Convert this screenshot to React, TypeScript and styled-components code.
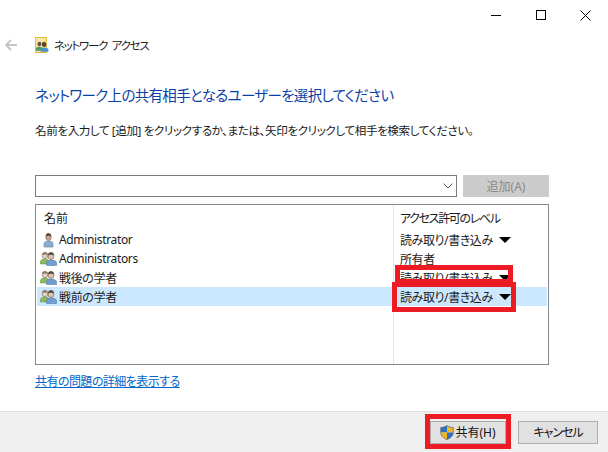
import React from 'react';
import styled, { createGlobalStyle } from 'styled-components';

const GlobalStyle = createGlobalStyle`
	html, body {
		margin: 0;
		padding: 0;
		background: #fff;
	}
	body {
		font-family: "Noto Sans", "Noto Sans CJK JP", sans-serif;
		font-size: 12px;
		font-feature-settings: "palt";
		color: #1a1a1a;
	}
`;

const Win = styled('div')`
	width: 608px;
	height: 452px;
	display: flex;
	flex-direction: column;
	overflow: hidden;
	position: relative;
`;

const TitleBar = styled('div')`
	height: 30px;
	display: flex;
	justify-content: flex-end;
	align-items: center;
`;

const WinButton = styled('div')`
	width: 45px;
	height: 28px;
	display: flex;
	align-items: center;
	justify-content: center;
	svg { display: block; }
`;

const NavRow = styled('div')`
	height: 30px;
	display: flex;
	align-items: center;
	padding-left: 5px;
	gap: 18px;
`;

const NavTitle = styled('div')`
	display: flex;
	align-items: center;
	gap: 5px;
	font-size: 11.5px;
	letter-spacing: -1.3px;
	word-spacing: 3px;
	color: #222;
`;

const Main = styled('div')`
	flex: 1;
	padding: 0 59px 0 35px;
	display: flex;
	flex-direction: column;
`;

const Heading = styled('h1')`
	margin: 24px 0 0;
	height: 22px;
	line-height: 22px;
	font-size: 14.5px;
	letter-spacing: -0.68px;
	font-weight: 400;
	color: #0a3fa8;
	white-space: nowrap;
`;

const Description = styled('p')`
	margin: 16px 0 0;
	height: 18px;
	line-height: 18px;
	font-size: 11.6px;
	letter-spacing: -0.42px;
	white-space: nowrap;
`;

const AddRow = styled('div')`
	margin-top: 35px;
	display: flex;
	gap: 6px;
	height: 22px;
`;

const Combo = styled('div')`
	flex: 1;
	background: #fff;
	border: 1px solid #7a7a7a;
	display: flex;
	align-items: center;
	justify-content: flex-end;
	padding-right: 3px;
`;

const AddButton = styled('div')`
	width: 86px;
	background: #cccccc;
	color: #8a8a8a;
	display: flex;
	align-items: center;
	justify-content: center;
	font-size: 12px;
`;

const Table = styled('div')`
	margin-top: 7px;
	height: 161px;
	border: 1px solid #828790;
	display: grid;
	grid-template-columns: 357px 1fr;
	position: relative;
	padding: 1px;
	box-sizing: border-box;
`;

const ColumnLine = styled('div')`
	position: absolute;
	top: 0;
	bottom: 0;
	left: 357px;
	width: 1px;
	background: #e5e5e5;
`;

const Rows = styled('div')`
	grid-column: 1 / 3;
	display: flex;
	flex-direction: column;
`;

const HeaderRow = styled('div')`
	height: 24px;
	display: grid;
	grid-template-columns: 356px 1fr;
	align-items: center;
	padding-bottom: 1px;
	box-sizing: border-box;
`;

const Row = styled('div')<{ $selected?: boolean }>`
	height: 19px;
	display: grid;
	grid-template-columns: 356px 1fr;
	align-items: center;
	background: ${props => (props.$selected ? '#cce8ff' : 'transparent')};
	position: relative;
`;

const NameHead = styled('div')`
	padding-left: 7px;
`;

const LevelHead = styled('div')`
	padding-left: 7px;
	white-space: nowrap;
	letter-spacing: -1.35px;
`;

const LevelCell = styled('div')`
	padding-left: 7px;
	display: flex;
	align-items: center;
	gap: 6px;
	white-space: nowrap;
	letter-spacing: -0.4px;
`;

const NameCell = styled('div')`
	display: flex;
	align-items: center;
	padding-left: 3px;
	gap: 2px;
	letter-spacing: -0.35px;
	svg { flex: none; }
`;

const Caret = styled('span')`
	width: 0;
	height: 0;
	border-left: 6.5px solid transparent;
	border-right: 6.5px solid transparent;
	border-top: 6.5px solid #000;
`;

const HelpLink = styled('a')`
	margin-top: 8px;
	height: 18px;
	line-height: 18px;
	color: #0066cc;
	text-decoration: underline;
	font-size: 12px;
	letter-spacing: -0.55px;
`;

const Footer = styled('div')`
	height: 41px;
	box-sizing: border-box;
	background: #f0f0f0;
	border-top: 1px solid #dfdfdf;
	display: flex;
	justify-content: flex-end;
	align-items: center;
	gap: 12px;
	padding-right: 10px;
`;

const FooterButton = styled('div')<{ $wide?: boolean }>`
	width: ${props => (props.$wide ? 80 : 76)}px;
	height: 23px;
	box-sizing: border-box;
	background: #e1e1e1;
	border: 1px solid #adadad;
	display: flex;
	align-items: center;
	justify-content: center;
	gap: 1px;
	font-size: 12px;
	letter-spacing: ${props => (props.$wide ? '-1px' : '0')};
	color: #111;
`;

const RedBox = styled('div')<{ $x: number; $y: number; $w: number; $h: number }>`
	position: absolute;
	left: ${props => props.$x}px;
	top: ${props => props.$y}px;
	width: ${props => props.$w}px;
	height: ${props => props.$h}px;
	box-sizing: border-box;
	border: 5px solid #ed1c24;
`;

const UserIcon = () => (
	<svg width="17" height="16" viewBox="0 0 17 16">
		<path d="M4 15v-3.500C4 10 6 9 8.500 9s4.500 1 4.500 2.500V15z" fill="#8aaed2" stroke="#5f7f9f" strokeWidth="0.6" />
		<ellipse cx="8.500" cy="5" rx="2.800" ry="3.600" fill="#c9a088" stroke="#6f5a4a" strokeWidth="0.5" />
		<path d="M5.800 4.500C5.800 2 7 1.200 8.500 1.200S11.200 2 11.200 4.500C10 3.500 7 3.500 5.800 4.500z" fill="#54463c" />
	</svg>
);

const GroupIcon = () => (
	<svg width="17" height="15" viewBox="0 0 17 15">
		<path d="M0.500 13v-2.500C0.500 9 2.500 8 5 8s4 1 4 2.500V13z" fill="#8cbc5c" stroke="#5c8a38" strokeWidth="0.5" />
		<ellipse cx="5" cy="4.500" rx="2.800" ry="3.300" fill="#e2d2c4" stroke="#7a6a5c" strokeWidth="0.6" />
		<path d="M2.400 4C2.400 2 3.600 1.200 5 1.200S7.600 2 7.600 4C6.500 3.200 3.600 3.200 2.400 4z" fill="#8a7868" />
		<path d="M6.500 14.500v-3C6.500 10 8.500 9 11 9s5.500 1 5.500 2.500v3z" fill="#6f9fd0" stroke="#47709c" strokeWidth="0.5" />
		<ellipse cx="11" cy="5" rx="3" ry="3.600" fill="#dcc4b0" stroke="#6f5a4a" strokeWidth="0.6" />
		<path d="M8.100 4.500C8.100 2.200 9.500 1.200 11 1.200s2.900 1 2.900 3.300C12.500 3.500 9.500 3.500 8.100 4.500z" fill="#5a4c42" />
	</svg>
);

const TitleIcon = () => (
	<svg width="14" height="16" viewBox="0 0 14 16">
		<rect x="0.500" y="0.500" width="11" height="15" fill="#f6e7a8" stroke="#e0bb3c" />
		<g transform="translate(0.500 3.500) scale(0.780)">
			<path d="M0.500 13v-2.500C0.500 9 2.500 8 5 8s4 1 4 2.500V13z" fill="#4f9a5c" />
			<ellipse cx="5" cy="4.500" rx="2.500" ry="3" fill="#6b5245" />
			<path d="M6.500 14.500v-3C6.500 10 8.500 9 11 9s5.500 1 5.500 2.500v3z" fill="#4f8fcf" />
			<ellipse cx="11" cy="5" rx="2.800" ry="3.400" fill="#5a4438" />
		</g>
	</svg>
);

const Shield = () => (
	<svg width="14" height="15" viewBox="0 0 14 15">
		<path d="M7 0.500V7.500H0.800V2.500C3 2.500 5 2 7 0.500z" fill="#2f6fc4" />
		<path d="M7 0.500C9 2 11 2.500 13.200 2.500V7.500H7z" fill="#f4b921" />
		<path d="M7 7.500H13.200C13.200 10.500 11 13 7 14.500z" fill="#2f6fc4" />
		<path d="M7 7.500V14.500C3 13 0.800 10.500 0.800 7.500z" fill="#f4b921" />
		<path d="M7 0.500C5 2 3 2.500 0.800 2.500V7.500C0.800 10.500 3 13 7 14.500C11 13 13.200 10.500 13.200 7.500V2.500C11 2.500 9 2 7 0.500z" fill="none" stroke="#4a5a70" strokeWidth="0.7" />
	</svg>
);

const rows = [
	{ name: 'Administrator', level: '読み取り/書き込み', group: false, caret: true },
	{ name: 'Administrators', level: '所有者', group: true, caret: false },
	{ name: '戦後の学者', level: '読み取り/書き込み', group: true, caret: true },
	{ name: '戦前の学者', level: '読み取り/書き込み', group: true, caret: true, selected: true },
];

export default function App() {
	return (
		<Win>
			<GlobalStyle />
			<TitleBar>
				<WinButton>
					<svg width="10" height="10" viewBox="0 0 10 10"><path d="M0 5.500H10" stroke="#000" /></svg>
				</WinButton>
				<WinButton>
					<svg width="10" height="10" viewBox="0 0 10 10"><rect x="0.500" y="0.500" width="9" height="9" fill="none" stroke="#000" /></svg>
				</WinButton>
				<WinButton>
					<svg width="11" height="11" viewBox="0 0 11 11"><path d="M0.500 0.500L10.500 10.500M10.500 0.500L0.500 10.500" stroke="#000" /></svg>
				</WinButton>
			</TitleBar>
			<NavRow>
				<svg width="12" height="12" viewBox="0 0 12 12">
					<path d="M6 1L1 6L6 11M1 6H12" fill="none" stroke="#c4c4c4" strokeWidth="1.800" />
				</svg>
				<NavTitle><TitleIcon />ネットワーク アクセス</NavTitle>
			</NavRow>
			<Main>
				<Heading>ネットワーク上の共有相手となるユーザーを選択してください</Heading>
				<Description>名前を入力して [追加] をクリックするか、または、矢印をクリックして相手を検索してください。</Description>
				<AddRow>
					<Combo>
						<svg width="10" height="6" viewBox="0 0 10 6"><path d="M0.500 0.500L5 5L9.500 0.500" fill="none" stroke="#555" /></svg>
					</Combo>
					<AddButton>追加(A)</AddButton>
				</AddRow>
				<Table>
					<ColumnLine />
					<Rows>
						<HeaderRow>
							<NameHead>名前</NameHead>
							<LevelHead>アクセス許可のレベル</LevelHead>
						</HeaderRow>
						{rows.map(row => (
							<Row key={row.name} $selected={row.selected}>
								<NameCell>
									{row.group ? <GroupIcon /> : <UserIcon />}
									{row.name}
								</NameCell>
								<LevelCell>
									{row.level}
									{row.caret ? <Caret /> : null}
								</LevelCell>
							</Row>
						))}
					</Rows>
				</Table>
				<HelpLink>共有の問題の詳細を表示する</HelpLink>
			</Main>
			<Footer>
				<FooterButton><Shield />共有(H)</FooterButton>
				<FooterButton $wide>キャンセル</FooterButton>
			</Footer>
			<RedBox $x={395} $y={265} $w={118} $h={19} />
			<RedBox $x={392} $y={282} $w={124} $h={30} />
			<RedBox $x={425} $y={414} $w={86} $h={35} />
		</Win>
	);
}
